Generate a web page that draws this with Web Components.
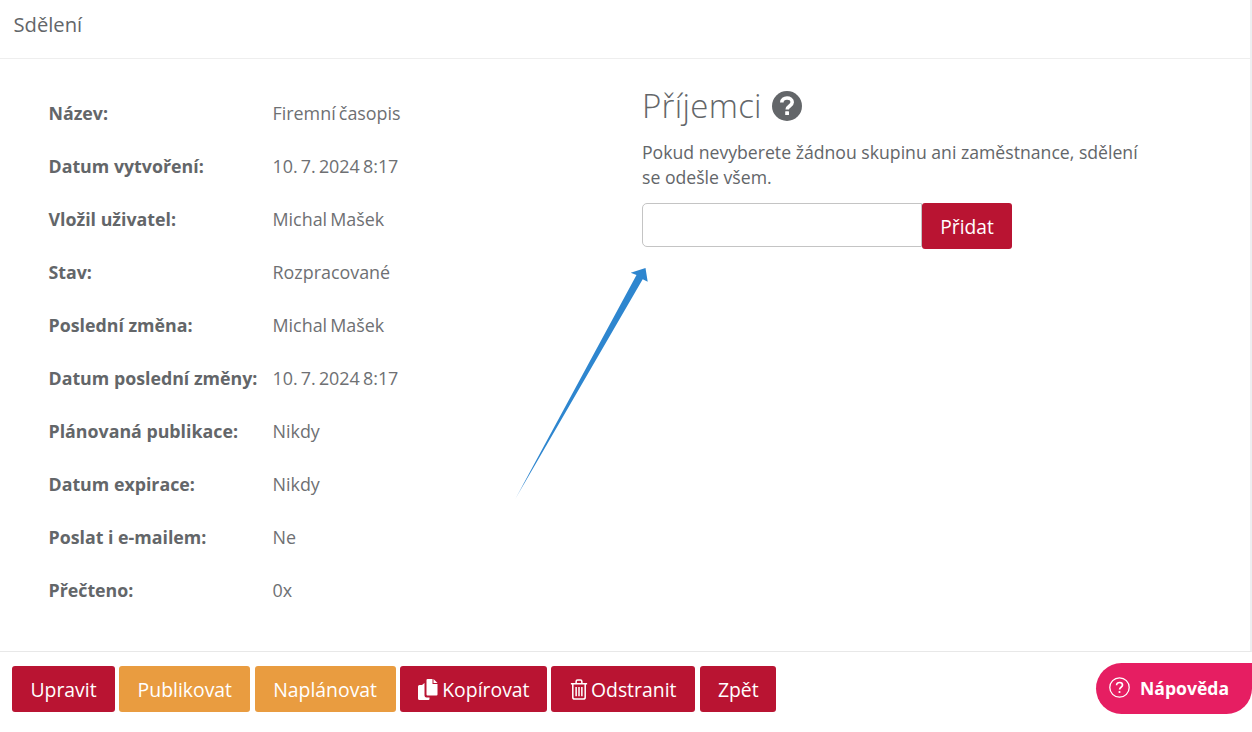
<!DOCTYPE html>
<html lang="cs"><head><meta charset="utf-8"><title>Sdělení</title>
<style>
html,body{margin:0;height:100%;background:#fff}
body{font-family:"Open Sans",sans-serif;color:#636669;font-size:17px;overflow:hidden}
</style></head><body>
<app-page>
  <page-header slot="header">Sdělení</page-header>
  <detail-list slot="left">
    <detail-row label="Název:">Firemní časopis</detail-row>
    <detail-row label="Datum vytvoření:">10. 7. 2024 8:17</detail-row>
    <detail-row label="Vložil uživatel:">Michal Mašek</detail-row>
    <detail-row label="Stav:">Rozpracované</detail-row>
    <detail-row label="Poslední změna:">Michal Mašek</detail-row>
    <detail-row label="Datum poslední změny:">10. 7. 2024 8:17</detail-row>
    <detail-row label="Plánovaná publikace:">Nikdy</detail-row>
    <detail-row label="Datum expirace:">Nikdy</detail-row>
    <detail-row label="Poslat i e-mailem:">Ne</detail-row>
    <detail-row label="Přečteno:">0x</detail-row>
  </detail-list>
  <recipients-panel slot="right"></recipients-panel>
  <action-button slot="footer" style="width:103px">Upravit</action-button>
  <action-button slot="footer" kind="warn" style="width:131px">Publikovat</action-button>
  <action-button slot="footer" kind="warn" style="width:141px">Naplánovat</action-button>
  <action-button slot="footer" style="width:147px"><svg slot="icon" width="22" height="21" viewBox="0 0 21 21"><path fill="#fff" d="M10 0h5v5h5v10.500a1 1 0 0 1-1 1H10a1 1 0 0 1-1-1V1a1 1 0 0 1 1-1zM16 0l4 4h-4zM7 4v12.500a2 2 0 0 0 2 2h3V20a1 1 0 0 1-1 1H2a1.500 1.500 0 0 1-1.500-1.500V7.500A1.500 1.500 0 0 1 2 6h2.500L7 4z"/></svg>Kopírovat</action-button>
  <action-button slot="footer" style="width:144px"><svg slot="icon" width="18" height="21" viewBox="0 0 18 22"><path fill="none" stroke="#fff" stroke-width="1.600" d="M2.500 5.500V19a2 2 0 0 0 2 2h9a2 2 0 0 0 2-2V5.500M.5 5h17M6 5V2.500A1.500 1.500 0 0 1 7.500 1h3A1.500 1.500 0 0 1 12 2.500V5M6 8.500v9.500M9 8.500v9.500M12 8.500v9.500"/></svg>Odstranit</action-button>
  <action-button slot="footer" style="width:76px;margin-left:.8px">Zpět</action-button>
  <help-button slot="overlay">Nápověda</help-button>
  <svg slot="overlay" style="position:absolute;left:0;top:0;pointer-events:none" width="1252" height="732" viewBox="0 0 1252 732">
    <defs><linearGradient id="ag" gradientUnits="userSpaceOnUse" x1="516" y1="498" x2="524" y2="484"><stop offset="0" stop-color="#2e86cf" stop-opacity=".4"/><stop offset="1" stop-color="#2e86cf"/></linearGradient></defs>
    <path fill="url(#ag)" d="M515 499.500L636.500 275L630.700 272.700L645.500 268L647.700 281.700L642.700 279.300Z"/>
  </svg>
</app-page>
<script>
function def(name, css, html, extra){
  customElements.define(name, class extends HTMLElement{
    constructor(){super();const r=this.attachShadow({mode:"open"});r.innerHTML="<style>"+css+"</style>"+html;}
    connectedCallback(){if(extra)extra(this,this.shadowRoot);}
  });
}
def("app-page",
 `:host{display:flex;flex-direction:column;height:732px;width:1252px;position:relative;box-sizing:border-box}
  .top{height:652px;box-sizing:border-box;border-right:2px solid #edeff1;border-bottom:1px solid #e8e8e8;display:flex;flex-direction:column}
  main{display:flex;flex:1}
  .l{width:642px;box-sizing:border-box;padding:28px 0 0 48.500px}
  .r{flex:1;padding-top:24px}
  footer{display:flex;gap:4.300px;padding:14px 0 0 12px}`,
 `<div class="top"><slot name="header"></slot><main><div class="l"><slot name="left"></slot></div><div class="r"><slot name="right"></slot></div></main></div>
  <footer><slot name="footer"></slot></footer><slot name="overlay"></slot>`);
def("page-header",
 `:host{display:flex;align-items:center;height:59px;box-sizing:border-box;padding:0 0 11px 13.500px;border-bottom:1px solid #eeeeee;font-size:20.200px;color:#636669}`,
 `<slot></slot>`);
def("detail-list",`:host{display:block}`,`<slot></slot>`);
def("detail-row",
 `:host{display:flex;height:53px;line-height:53px;font-size:17.900px;word-spacing:-1.500px;color:#6e7073;white-space:nowrap}
  b{width:224px;font-weight:700;color:#636669;font-size:17.800px;word-spacing:0}`,
 `<b></b><slot></slot>`,(h,r)=>{r.querySelector("b").textContent=h.getAttribute("label")});
def("recipients-panel",
 `:host{display:block;width:520px}
  h2{margin:0;font-weight:300;font-size:33px;line-height:46px;color:#636669;display:flex;align-items:center;gap:10px;letter-spacing:.3px}
  p{margin:11px 0 13px;font-size:17.650px;line-height:25px;color:#636669;width:505px}
  .f{display:flex;align-items:flex-start}
  .i{width:280px;height:44px;box-sizing:border-box;border:1px solid #c4c4c4;border-radius:5px 0 0 5px;background:#fff}
  .b{width:90px;height:46px;background:#b91432;color:#fff;display:flex;align-items:center;justify-content:center;font-size:19.200px;border-radius:3px}`,
 `<h2>Příjemci<svg width="30" height="30" viewBox="0 0 30 30"><circle cx="15" cy="15" r="15" fill="#636669"/><path fill="none" stroke="#fff" stroke-width="3.600" d="M9.800 11.500c0-3 2.400-4.500 5.200-4.500s5.200 1.600 5.200 4.200c0 3.900-5 3.600-5 7.300"/><rect x="13.200" y="20.300" width="3.800" height="3.800" rx=".5" fill="#fff"/></svg></h2>
  <p>Pokud nevyberete žádnou skupinu ani zaměstnance, sdělení se odešle všem.</p>
  <div class="f"><div class="i"></div><div class="b">Přidat</div></div>`);
def("action-button",
 `:host{display:flex;align-items:center;justify-content:center;gap:3px;height:46px;box-sizing:border-box;background:#b91432;color:#fff;border-radius:3px;font-size:19.400px;white-space:nowrap}
  :host([kind=warn]){background:#e99c40}`,
 `<slot name="icon"></slot><slot></slot>`);
def("help-button",
 `:host{position:absolute;left:1096px;top:663px;width:156px;height:51px;background:#e61e62;color:#fff;border-radius:25.500px 0 25.500px 25.500px;display:flex;align-items:center;gap:10px;box-sizing:border-box;padding:0 0 2px 13px;font:700 17.600px "Open Sans",sans-serif}
  svg{flex:none}`,
 `<svg width="21" height="21" viewBox="0 0 21 21"><circle cx="10.500" cy="10.500" r="9.700" fill="none" stroke="#fff" stroke-width="1.300"/><path fill="none" stroke="#fff" stroke-width="1.700" d="M7.600 8.300c0-1.900 1.300-2.800 3-2.800s2.900 1 2.900 2.500c0 2.300-2.900 2.100-2.900 4.500"/><circle cx="10.500" cy="15" r="1.100" fill="#fff"/></svg><slot></slot>`);
</script>
</body></html>
